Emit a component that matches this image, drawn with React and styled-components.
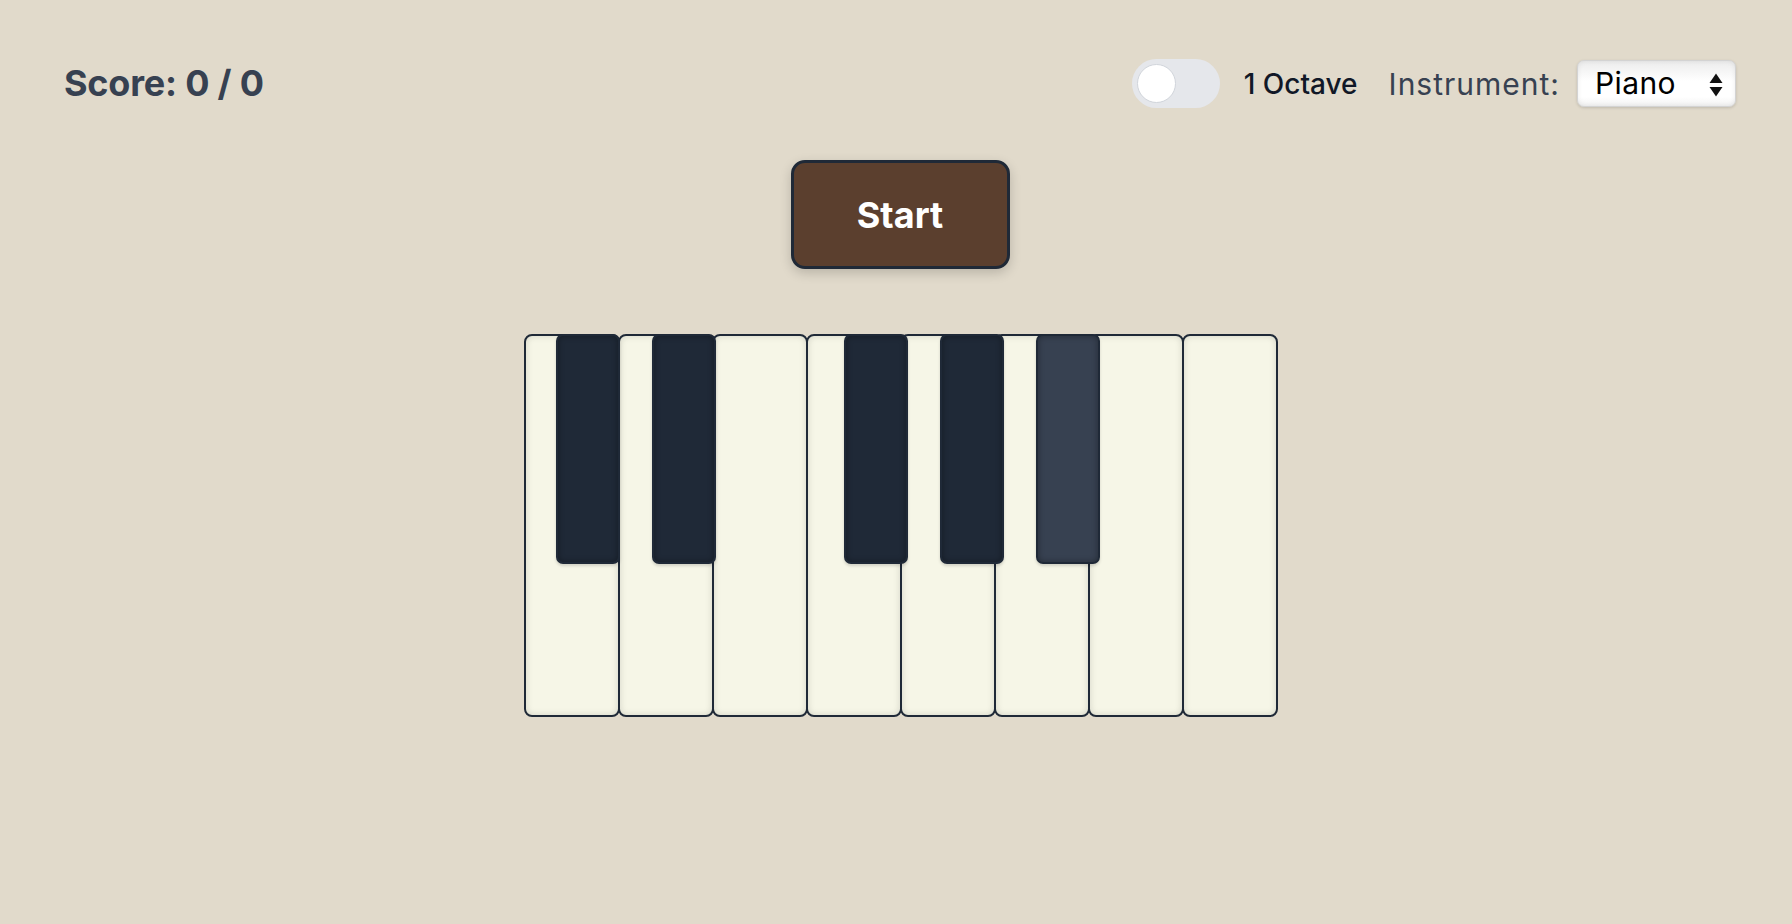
import { useState } from 'react';
import styled, { createGlobalStyle } from 'styled-components';

const WHITE_KEYS = ['C', 'D', 'E', 'F', 'G', 'A', 'B', 'C2'];
// black keys sit after these white key indexes
const BLACK_KEYS = [
  { note: 'C#', slot: 0 },
  { note: 'D#', slot: 1 },
  { note: 'F#', slot: 3 },
  { note: 'G#', slot: 4 },
  { note: 'A#', slot: 5 },
];

function App() {
  const [octaves, setOctaves] = useState(false);
  const [instrument, setInstrument] = useState('piano');

  return (
    <>
      <GlobalStyle />
      <Page>
        <Header>
          <Score>Score: 0 / 0</Score>
          <Controls>
            <Toggle
              type="button"
              $on={octaves}
              onClick={() => setOctaves(v => !v)}
              aria-label="octaves"
            >
              <Knob $on={octaves} />
            </Toggle>
            <OctaveLabel>{octaves ? '2 Octaves' : '1 Octave'}</OctaveLabel>
            <InstrumentLabel htmlFor="instrument">Instrument:</InstrumentLabel>
            <SelectWrap>
              <Select
                id="instrument"
                value={instrument}
                onChange={e => setInstrument(e.target.value)}
              >
                <option value="piano">Piano</option>
                <option value="guitar">Guitar</option>
                <option value="synth">Synth</option>
              </Select>
              <Arrows width="14" height="24" viewBox="0 0 14 24">
                <path d="M7 0.5 L13.5 10 L0.5 10 Z" fill="#111" />
                <path d="M7 23.5 L13.5 14 L0.5 14 Z" fill="#111" />
              </Arrows>
            </SelectWrap>
          </Controls>
        </Header>

        <StartButton type="button">Start</StartButton>

        <Piano>
          {WHITE_KEYS.map(n => (
            <WhiteKey key={n} />
          ))}
          {BLACK_KEYS.map(k => (
            <BlackKey key={k.note} $slot={k.slot} $active={k.note === 'A#'} />
          ))}
        </Piano>
      </Page>
    </>
  );
}

const GlobalStyle = createGlobalStyle`
  html, body {
    margin: 0;
    padding: 0;
    background: #e1dacb;
  }
  body {
    font-family: Inter, "Noto Sans", "Liberation Sans", sans-serif;
    min-height: 100vh;
  }
`;

const Page = styled.div`
  display: flex;
  flex-direction: column;
  align-items: center;
  padding: 59px 56px 0 64px;
  min-height: 924px;
  box-sizing: border-box;
`;

const Header = styled.header`
  display: flex;
  align-items: center;
  justify-content: space-between;
  width: 100%;
  height: 48px;
`;

const Score = styled.h2`
  margin: 0;
  font-size: 36px;
  font-weight: 700;
  color: #374151;
  letter-spacing: -0.2px;
`;

const Controls = styled.div`
  display: flex;
  align-items: center;
`;

const Toggle = styled.button`
  display: flex;
  align-items: center;
  justify-content: ${p => (p.$on ? 'flex-end' : 'flex-start')};
  width: 88px;
  height: 49px;
  padding: 0 5px;
  border: none;
  border-radius: 25px;
  background: ${p => (p.$on ? '#5b3f2e' : '#e5e7eb')};
  cursor: pointer;
  box-sizing: border-box;
`;

const Knob = styled.span`
  display: block;
  width: 39px;
  height: 39px;
  border-radius: 50%;
  background: #fff;
  border: 1.5px solid #d1d5db;
  box-sizing: border-box;
`;

const OctaveLabel = styled.span`
  margin: 2px 0 0 24px;
  font-size: 28px;
  font-weight: 500;
  color: #111827;
  letter-spacing: 0;
`;

const InstrumentLabel = styled.label`
  margin: 2px 0 0 31px;
  font-size: 30px;
  color: #374151;
  letter-spacing: 1px;
`;

const SelectWrap = styled.div`
  position: relative;
  margin-left: 17px;
`;

const Select = styled.select`
  appearance: none;
  width: 159px;
  height: 47px;
  padding: 0 0 0 17px;
  font-family: Inter, "Liberation Sans", sans-serif;
  font-size: 30px;
  letter-spacing: 0.4px;
  color: #000;
  background: linear-gradient(#ececec, #ffffff 45%, #ffffff 80%, #f2f2f2);
  border: 1px solid #d3d3d3;
  border-radius: 7px;
  box-shadow: 0 1px 3px rgba(0, 0, 0, 0.15), inset 0 0 5px rgba(0, 0, 0, 0.08);
  outline: none;
  cursor: pointer;
`;

const Arrows = styled.svg`
  position: absolute;
  right: 13px;
  top: 13px;
  pointer-events: none;
`;

const StartButton = styled.button`
  margin-top: 53px;
  width: 219px;
  height: 109px;
  background: #5b3f2e;
  color: #fff;
  font-family: Inter, "Liberation Sans", sans-serif;
  font-size: 36px;
  font-weight: 700;
  border: 3px solid #1f2937;
  border-radius: 14px;
  box-shadow: 0 4px 12px rgba(0, 0, 0, 0.18);
  cursor: pointer;
`;

const Piano = styled.div`
  position: relative;
  display: flex;
  margin: 65px 0 0 2px;
`;

const WhiteKey = styled.div`
  width: 96px;
  height: 383px;
  box-sizing: border-box;
  background: #f6f6e7;
  border: 2px solid #1f2937;
  border-radius: 8px;
  box-shadow: inset 0 0 7px rgba(0, 0, 0, 0.14);

  & + & {
    margin-left: -2px;
  }
`;

const BlackKey = styled.div`
  position: absolute;
  top: 0;
  left: ${p => (p.$slot + 1) * 96 - 64}px;
  width: 64px;
  height: 230px;
  box-sizing: border-box;
  background: ${p => (p.$active ? '#374151' : '#1f2937')};
  border: 2px solid #1f2937;
  border-radius: 7px;
  box-shadow: inset 0 0 6px rgba(0, 0, 0, 0.35), 0 2px 3px rgba(0, 0, 0, 0.15);
  z-index: 1;
`;

export default App;
